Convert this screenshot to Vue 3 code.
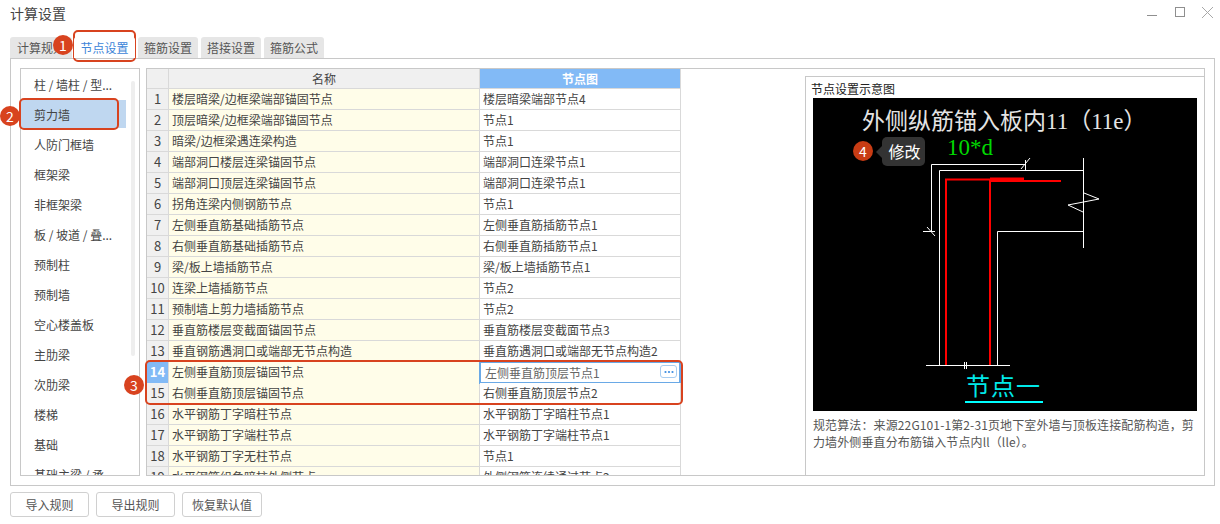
<script setup>
const tabs = ['计算规则', '节点设置', '箍筋设置', '搭接设置', '箍筋公式']
const items = ['柱 / 墙柱 / 型...', '剪力墙', '人防门框墙', '框架梁', '非框架梁', '板 / 坡道 / 叠...', '预制柱', '预制墙', '空心楼盖板', '主肋梁', '次肋梁', '楼梯', '基础', '基础主梁 / 承...']
const rows = [
  ['楼层暗梁/边框梁端部锚固节点', '楼层暗梁端部节点4'],
  ['顶层暗梁/边框梁端部锚固节点', '节点1'],
  ['暗梁/边框梁遇连梁构造', '节点1'],
  ['端部洞口楼层连梁锚固节点', '端部洞口连梁节点1'],
  ['端部洞口顶层连梁锚固节点', '端部洞口连梁节点1'],
  ['拐角连梁内侧钢筋节点', '节点1'],
  ['左侧垂直筋基础插筋节点', '左侧垂直筋插筋节点1'],
  ['右侧垂直筋基础插筋节点', '右侧垂直筋插筋节点1'],
  ['梁/板上墙插筋节点', '梁/板上墙插筋节点1'],
  ['连梁上墙插筋节点', '节点2'],
  ['预制墙上剪力墙插筋节点', '节点2'],
  ['垂直筋楼层变截面锚固节点', '垂直筋楼层变截面节点3'],
  ['垂直钢筋遇洞口或端部无节点构造', '垂直筋遇洞口或端部无节点构造2'],
  ['左侧垂直筋顶层锚固节点', '左侧垂直筋顶层节点1'],
  ['右侧垂直筋顶层锚固节点', '右侧垂直筋顶层节点2'],
  ['水平钢筋丁字暗柱节点', '水平钢筋丁字暗柱节点1'],
  ['水平钢筋丁字端柱节点', '水平钢筋丁字端柱节点1'],
  ['水平钢筋丁字无柱节点', '节点1'],
  ['水平钢筋组角暗柱外侧节点', '外侧钢筋连续通过节点2'],
]
</script>

<template>
  <div class="page">
    <header class="titlebar">
      <span class="title">计算设置</span>
      <div class="controls">
        <svg width="66" height="12" viewBox="0 0 66 12" fill="none" stroke="#8f8f8f" stroke-width="1">
          <path d="M0 8.5H10" />
          <rect x="28.5" y="0.5" width="9" height="9" />
          <path d="M55 0L66 11M66 0L55 11" stroke="#a8a8a8" />
        </svg>
      </div>
    </header>

    <nav class="tabs">
      <div v-for="(t, i) in tabs" :key="t" class="tab" :class="{ active: i === 1, first: i === 0 }">{{ t }}</div>
    </nav>

    <section class="panel">
      <aside class="list">
        <div v-for="(it, i) in items" :key="it" class="item" :class="{ selected: i === 1 }">{{ it }}</div>
        <div class="scroll"></div>
      </aside>

      <div class="right">
        <div class="table">
          <div class="row head">
            <div class="num"></div>
            <div class="name">名称</div>
            <div class="node">节点图</div>
          </div>
          <div v-for="(r, i) in rows" :key="i" class="row" :class="{ current: i === 13 }">
            <div class="num">{{ i + 1 }}</div>
            <div class="name">{{ r[0] }}</div>
            <div class="node">
              <span>{{ r[1] }}</span>
              <span v-if="i === 13" class="more">
                <svg width="10" height="4" viewBox="0 0 10 4" fill="#3c8ce0">
                  <circle cx="1.5" cy="2" r="1.1" />
                  <circle cx="5" cy="2" r="1.1" />
                  <circle cx="8.5" cy="2" r="1.1" />
                </svg>
              </span>
            </div>
          </div>
        </div>

        <div class="preview">
          <div class="caption">节点设置示意图</div>
          <svg class="drawing" width="384" height="313" viewBox="813 98 384 313">
            <rect x="813" y="98" width="384" height="313" fill="#000" />
            <text x="862" y="129" class="t-title">外侧纵筋锚入板内<tspan class="t-latin">11</tspan>（<tspan class="t-latin">11e</tspan>）</text>
            <text x="947" y="155" class="t-green">10*d</text>
            <g fill="none" stroke="#fff" stroke-width="1">
              <path d="M1025.5 164.5H931.5V232" />
              <path d="M1021 169L1030 158M1025.5 160V170" />
              <path d="M923 231.5H935M927 227L935 236" />
              <path d="M939.5 365V170.5H1083.5" />
              <path d="M1083.5 158V248" />
              <path d="M1084 193L1099 199L1068 205L1083 212" />
              <path d="M997.5 365V231.5H1083.5" />
              <path d="M926 365.5H1010" />
              <path d="M961 365.5H970M964.5 362V369M966.5 362V369" />
            </g>
            <g fill="none" stroke="#f00" stroke-width="2">
              <path d="M946 365V179.5H1024" />
              <path d="M990 365V181H1061" />
              <path d="M990 178.5H1024" />
            </g>
            <text x="966" y="395" class="t-cyan">节点一</text>
            <rect x="965" y="401" width="78" height="2" fill="#0ff" />
          </svg>
          <p class="desc">规范算法：来源22G101-1第2-31页地下室外墙与顶板连接配筋构造，剪力墙外侧垂直分布筋锚入节点内ll（lle）。</p>
        </div>
      </div>
    </section>

    <footer class="actions">
      <button class="btn">导入规则</button>
      <button class="btn">导出规则</button>
      <button class="btn wide">恢复默认值</button>
    </footer>

    <div class="mark mark-tab"></div>
    <div class="mark mark-item"></div>
    <div class="mark mark-rows"></div>
    <div class="badge b1">1</div>
    <div class="badge b2">2</div>
    <div class="badge b3">3</div>
    <div class="badge b4">4</div>
    <div class="tip">修改</div>
  </div>
</template>

<style scoped>
.page {
  position: relative;
  width: 1220px;
  height: 524px;
  overflow: hidden;
  background: #fff;
  font-family: "Noto Sans CJK SC", "Liberation Sans", sans-serif;
  font-size: 12px;
  color: #333;
}
.titlebar {
  height: 26px;
  padding: 0 7px 0 10px;
  display: flex;
  align-items: center;
  justify-content: space-between;
}
.title { font-size: 14px; color: #444; }
.controls { display: flex; }
.tabs {
  height: 32px;
  padding: 11px 0 0 10px;
  box-sizing: border-box;
  display: flex;
}
.tab {
  width: 60px;
  height: 21px;
  margin-right: 3px;
  background: #e6e6e6;
  border-radius: 3px 3px 0 0;
  text-align: center;
  line-height: 21px;
  color: #555;
}
.tab.first { width: 62px; margin-right: 2px; }
.tab.active { width: 61px; background: #fff; color: #3d85d8; position: relative; z-index: 1; }
.panel {
  width: 1205px;
  height: 428px;
  margin-left: 10px;
  box-sizing: border-box;
  border: 1px solid #c8c8c8;
  padding: 9px;
  display: flex;
  gap: 6px;
}
.list {
  position: relative;
  width: 120px;
  height: 408px;
  flex: none;
  box-sizing: border-box;
  border: 1px solid #c8c8c8;
  padding-top: 1px;
  overflow: hidden;
}
.item {
  width: 105px;
  height: 30px;
  padding-left: 13px;
  box-sizing: border-box;
  line-height: 30px;
  color: #444;
  white-space: nowrap;
}
.item.selected {
  background: linear-gradient(#bfd7f0, #bfd7f0) no-repeat;
  background-size: 100% 28px;
}
.scroll {
  position: absolute;
  left: 110px;
  top: 12px;
  width: 4px;
  height: 275px;
  border-radius: 2px;
  background: #eeeeee;
}
.right {
  flex: 1;
  height: 408px;
  box-sizing: border-box;
  border: 1px solid #c8c8c8;
  display: flex;
  justify-content: space-between;
  overflow: hidden;
}
.table { width: 534px; flex: none; }
.row {
  display: grid;
  grid-template-columns: 22px 311px 201px;
  height: 21px;
  box-sizing: border-box;
  border-bottom: 1px solid #d9d9d9;
  line-height: 20px;
}
.row.head { height: 20px; line-height: 19px; }
.row > div { border-right: 1px solid #d9d9d9; box-sizing: border-box; white-space: nowrap; }
.num {
  background: #f0f0f0;
  text-align: center;
  font-size: 13px;
  color: #444;
}
.name { background: #fffde9; padding-left: 3px; color: #444; }
.node { background: #fff; padding-left: 3px; color: #444; position: relative; }
.head .name { background: #f0f0f0; text-align: center; padding: 0; }
.head .node { background: #82baf6; color: #fff; text-align: center; font-weight: 700; padding: 0; }
.current .num { background: #82baf6; color: #fff; font-weight: 700; }
.current .node {
  padding-left: 4px;
  line-height: 18px;
  border: 2px solid #6aa9e6;
  margin: -1px 0 -1px -1px;
  height: 23px;
  padding-top: 1px;
  color: #666;
}
.more {
  position: absolute;
  right: 2px;
  top: 2px;
  width: 17px;
  height: 13px;
  box-sizing: border-box;
  border: 1px solid #a9cdf0;
  border-radius: 3px;
  display: flex;
  align-items: center;
  justify-content: center;
}
.preview {
  width: 399px;
  flex: none;
  margin-top: 7px;
  box-sizing: border-box;
  border-left: 1px solid #c8c8c8;
  border-top: 1px solid #c8c8c8;
}
.caption {
  height: 21px;
  padding: 4px 0 0 5px;
  box-sizing: border-box;
  line-height: 16px;
  font-size: 12px;
  color: #222;
}
.drawing { display: block; margin-left: 7px; }
.t-title { font-size: 23px; fill: #e4e4e4; }
.t-latin { font-family: "Liberation Serif", serif; }
.t-green { font-family: "Liberation Serif", serif; font-size: 23px; fill: #00d800; }
.t-cyan { font-size: 24px; fill: #00e8e8; letter-spacing: 1px; }
.desc {
  margin: 5px 0 0 7px;
  width: 384px;
  line-height: 17px;
  letter-spacing: 0.12px;
  color: #555;
}
.actions {
  display: flex;
  gap: 7px;
  padding: 6px 0 0 10px;
}
.btn {
  width: 79px;
  height: 25px;
  padding: 0;
  background: #fff;
  border: 1px solid #d0d0d0;
  border-radius: 3px;
  font: inherit;
  color: #555;
}
.btn.wide { width: 80px; }
.mark {
  position: absolute;
  box-sizing: border-box;
  border: 2px solid #d8431f;
  border-radius: 5px;
}
.mark-tab { left: 73px; top: 30px; width: 63px; height: 32px; }
.mark-item { left: 19px; top: 98px; width: 100px; height: 32px; }
.mark-rows { left: 145px; top: 360px; width: 538px; height: 45px; }
.badge {
  position: absolute;
  width: 20px;
  height: 20px;
  border-radius: 50%;
  background: #d8431f;
  color: #fff;
  font-size: 14px;
  line-height: 20px;
  text-align: center;
}
.b1 { left: 53px; top: 35px; }
.b2 { left: 0; top: 106px; }
.b3 { left: 124px; top: 375px; }
.b4 { left: 853px; top: 141px; background: #c83c14; }
.tip {
  position: absolute;
  left: 882px;
  top: 137px;
  width: 43px;
  height: 29px;
  padding-left: 2px;
  box-sizing: border-box;
  border-radius: 5px;
  background: #333;
  color: #fff;
  font-size: 16px;
  line-height: 28px;
  text-align: center;
}
.tip::before {
  content: "";
  position: absolute;
  left: -6px;
  top: 9px;
  border: 6px solid transparent;
  border-left: 0;
  border-right-color: #333;
}
</style>
